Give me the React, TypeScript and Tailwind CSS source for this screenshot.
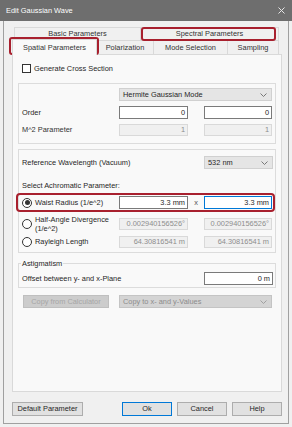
import React from "react";

const Chevron = ({ color = "#6b6b6b" }: { color?: string }) => (
  <svg width="7" height="4" viewBox="0 0 7 4" className="shrink-0">
    <path d="M0.5 0.5 L3.5 3.5 L6.5 0.5" fill="none" stroke={color} strokeWidth="0.9" />
  </svg>
);

const TextBox: React.FC<{ value: string; disabled?: boolean; focused?: boolean }> = ({ value, disabled, focused }) => (
  <div
    className={
      disabled
        ? "h-[12px] flex items-center justify-end pr-[2px] border border-[#d9d9d9] bg-[#f0f0f0] text-[#8d8d8d]"
        : focused
        ? "h-[13px] flex items-center justify-end pr-[2px] border border-[#0078d7] bg-white text-[#1e1e1e]"
        : "h-[13px] flex items-center justify-end pr-[2px] border border-[#7a7a7a] bg-white text-[#1e1e1e]"
    }
  >
    {value}
  </div>
);

const Radio = ({ checked }: { checked?: boolean }) => (
  <span className="w-[10px] h-[10px] rounded-full border border-[#333] bg-white flex items-center justify-center shrink-0">
    {checked && <span className="w-[5px] h-[5px] rounded-full bg-[#333]" />}
  </span>
);

export default function App() {
  return (
    <div className="relative w-[292px] h-[427px] bg-[#f0f0f0] flex flex-col overflow-hidden font-['Liberation_Sans',Arial,sans-serif] text-[7.4px] leading-none text-[#262626]">
      {/* title bar */}
      <div className="h-[21px] shrink-0 bg-[#6e6e6e] flex items-center pl-[6px] pr-[7px] text-white text-[7.4px]">
        <span>Edit Gaussian Wave</span>
        <svg className="ml-auto" width="7" height="7" viewBox="0 0 7 7">
          <path d="M0.5 0.5L6.5 6.5M6.5 0.5L0.5 6.5" stroke="#e6e6e6" strokeWidth="1" />
        </svg>
      </div>

      <div className="flex-1 mx-[3px] mb-[3px] border-x border-b border-[#a0a0a0] pl-[8px] pr-[6px] pt-[6px] flex flex-col">
        {/* tab headers */}
        <div className="h-[27px] flex flex-col">
          <div className="flex h-[13px] pl-[2px] text-[#333]">
            <div className="w-[126px] border-t border-l border-[#d9d9d9] flex items-center justify-center">Basic Parameters</div>
            <div className="w-[139px] border-t border-x border-[#d9d9d9] flex items-center justify-center">Spectral Parameters</div>
          </div>
          <div className="flex h-[14px] items-end text-[#333]">
            <div className="relative z-10 w-[85px] h-[16px] -mb-[1px] bg-[#f9f9f9] border-t border-x border-[#d9d9d9] flex items-center justify-center">
              Spatial Parameters
            </div>
            <div className="w-[57px] h-[14px] border-t border-r border-[#d9d9d9] flex items-center justify-center">Polarization</div>
            <div className="w-[74px] h-[14px] border-t border-r border-[#d9d9d9] flex items-center justify-center">Mode Selection</div>
            <div className="w-[51px] h-[14px] border-t border-r border-[#d9d9d9] flex items-center justify-center">Sampling</div>
          </div>
        </div>

        {/* tab page */}
        <div className="h-[338px] border border-[#d9d9d9] bg-[#f9f9f9] flex flex-col">
          <div className="mt-[9px] ml-[9px] h-[9px] flex items-center gap-[3px]">
            <span className="w-[9px] h-[9px] border border-[#333] bg-white" />
            <span>Generate Cross Section</span>
          </div>

          {/* mode group */}
          <div className="mt-[10px] mx-[5px] border border-[#dcdcdc] pl-[3px] pr-[2px] pt-[4px] pb-[7px]">
            <div className="grid grid-cols-[97px_69px_16px_68px] items-center">
              <div className="col-start-2 col-span-3 h-[13px] bg-[#e5e5e5] border border-[#d0d0d0] flex items-center pl-[3px] pr-[4px]">
                <span>Hermite Gaussian Mode</span>
                <span className="ml-auto"><Chevron /></span>
              </div>
            </div>
            <div className="mt-[5px] grid grid-cols-[97px_69px_16px_68px] items-center">
              <span>Order</span>
              <TextBox value="0" />
              <span />
              <TextBox value="0" />
            </div>
            <div className="mt-[5px] grid grid-cols-[97px_69px_16px_68px] items-center">
              <span className="text-[#333]">M^2 Parameter</span>
              <TextBox value="1" disabled />
              <span />
              <TextBox value="1" disabled />
            </div>
          </div>

          {/* wavelength group */}
          <div className="mt-[5px] mx-[5px] border border-[#dcdcdc] pl-[3px] pr-[2px] pt-[6px] pb-[4px]">
            <div className="grid grid-cols-[182px_69px] items-center">
              <span>Reference Wavelength (Vacuum)</span>
              <div className="h-[13px] bg-[#e5e5e5] border border-[#d0d0d0] flex items-center pl-[3px] pr-[4px]">
                <span>532 nm</span>
                <span className="ml-auto"><Chevron /></span>
              </div>
            </div>
            <div className="mt-[12px] h-[9px] flex items-center">Select Achromatic Parameter:</div>
            <div className="mt-[3px] -ml-[6px] -mr-[2px] border-2 border-[#a8202e] rounded-[4px] pl-[4px] py-[1px]">
              <div className="grid grid-cols-[97px_69px_16px_68px] items-center">
                <span className="flex items-center gap-[3px]">
                  <Radio checked />
                  <span>Waist Radius (1/e^2)</span>
                </span>
                <TextBox value="3.3 mm" />
                <span className="text-center text-[#555]">x</span>
                <TextBox value="3.3 mm" focused />
              </div>
            </div>
            <div className="mt-[3px] h-[18px] grid grid-cols-[97px_69px_16px_68px] items-center">
              <span className="flex items-center gap-[3px]">
                <Radio />
                <span className="leading-[9px]">
                  Half-Angle Divergence
                  <br />
                  (1/e^2)
                </span>
              </span>
              <TextBox value="0.002940156526°" disabled />
              <span />
              <TextBox value="0.002940156526°" disabled />
            </div>
            <div className="mt-[3px] grid grid-cols-[97px_69px_16px_68px] items-center">
              <span className="flex items-center gap-[3px]">
                <Radio />
                <span>Rayleigh Length</span>
              </span>
              <TextBox value="64.30816541 m" disabled />
              <span />
              <TextBox value="64.30816541 m" disabled />
            </div>
          </div>

          {/* astigmatism group */}
          <div className="relative mt-[10px] mx-[5px] border border-[#dcdcdc] pl-[3px] pr-[2px] pt-[8px] pb-[2px]">
            <span className="absolute -top-[4px] left-[2px] px-[1px] bg-[#f9f9f9]">Astigmatism</span>
            <div className="grid grid-cols-[182px_69px] items-center">
              <span>Offset between y- and x-Plane</span>
              <TextBox value="0 m" />
            </div>
          </div>

          <div className="mt-[7px] ml-[10px] flex items-center gap-[10px]">
            <div className="w-[86px] h-[13px] bg-[#cccccc] border border-[#bfbfbf] flex items-center justify-center text-[#a6a6a6]">
              Copy from Calculator
            </div>
            <div className="w-[153px] h-[13px] bg-[#d4d4d4] border border-[#c4c4c4] flex items-center pl-[3px] pr-[4px] text-[#8c8c8c]">
              <span>Copy to x- and y-Values</span>
              <span className="ml-auto"><Chevron color="#9a9a9a" /></span>
            </div>
          </div>
        </div>

        {/* dialog buttons */}
        <div className="mt-[10px] h-[14px] flex">
          <div className="w-[71px] bg-[#e1e1e1] border border-[#adadad] flex items-center justify-center">Default Parameter</div>
          <div className="ml-auto w-[50px] bg-[#e1e1e1] border border-[#0078d7] flex items-center justify-center">Ok</div>
          <div className="ml-[5px] w-[50px] bg-[#e1e1e1] border border-[#adadad] flex items-center justify-center">Cancel</div>
          <div className="ml-[5px] w-[50px] bg-[#e1e1e1] border border-[#adadad] flex items-center justify-center">Help</div>
        </div>
      </div>

      {/* annotation outlines */}
      <div className="absolute left-[141px] top-[27px] w-[135px] h-[14px] border-2 border-[#a8202e] rounded-[3px]" />
      <div className="absolute left-[9px] top-[37px] w-[90px] h-[18px] border-2 border-[#a8202e] rounded-[3px]" />
    </div>
  );
}
